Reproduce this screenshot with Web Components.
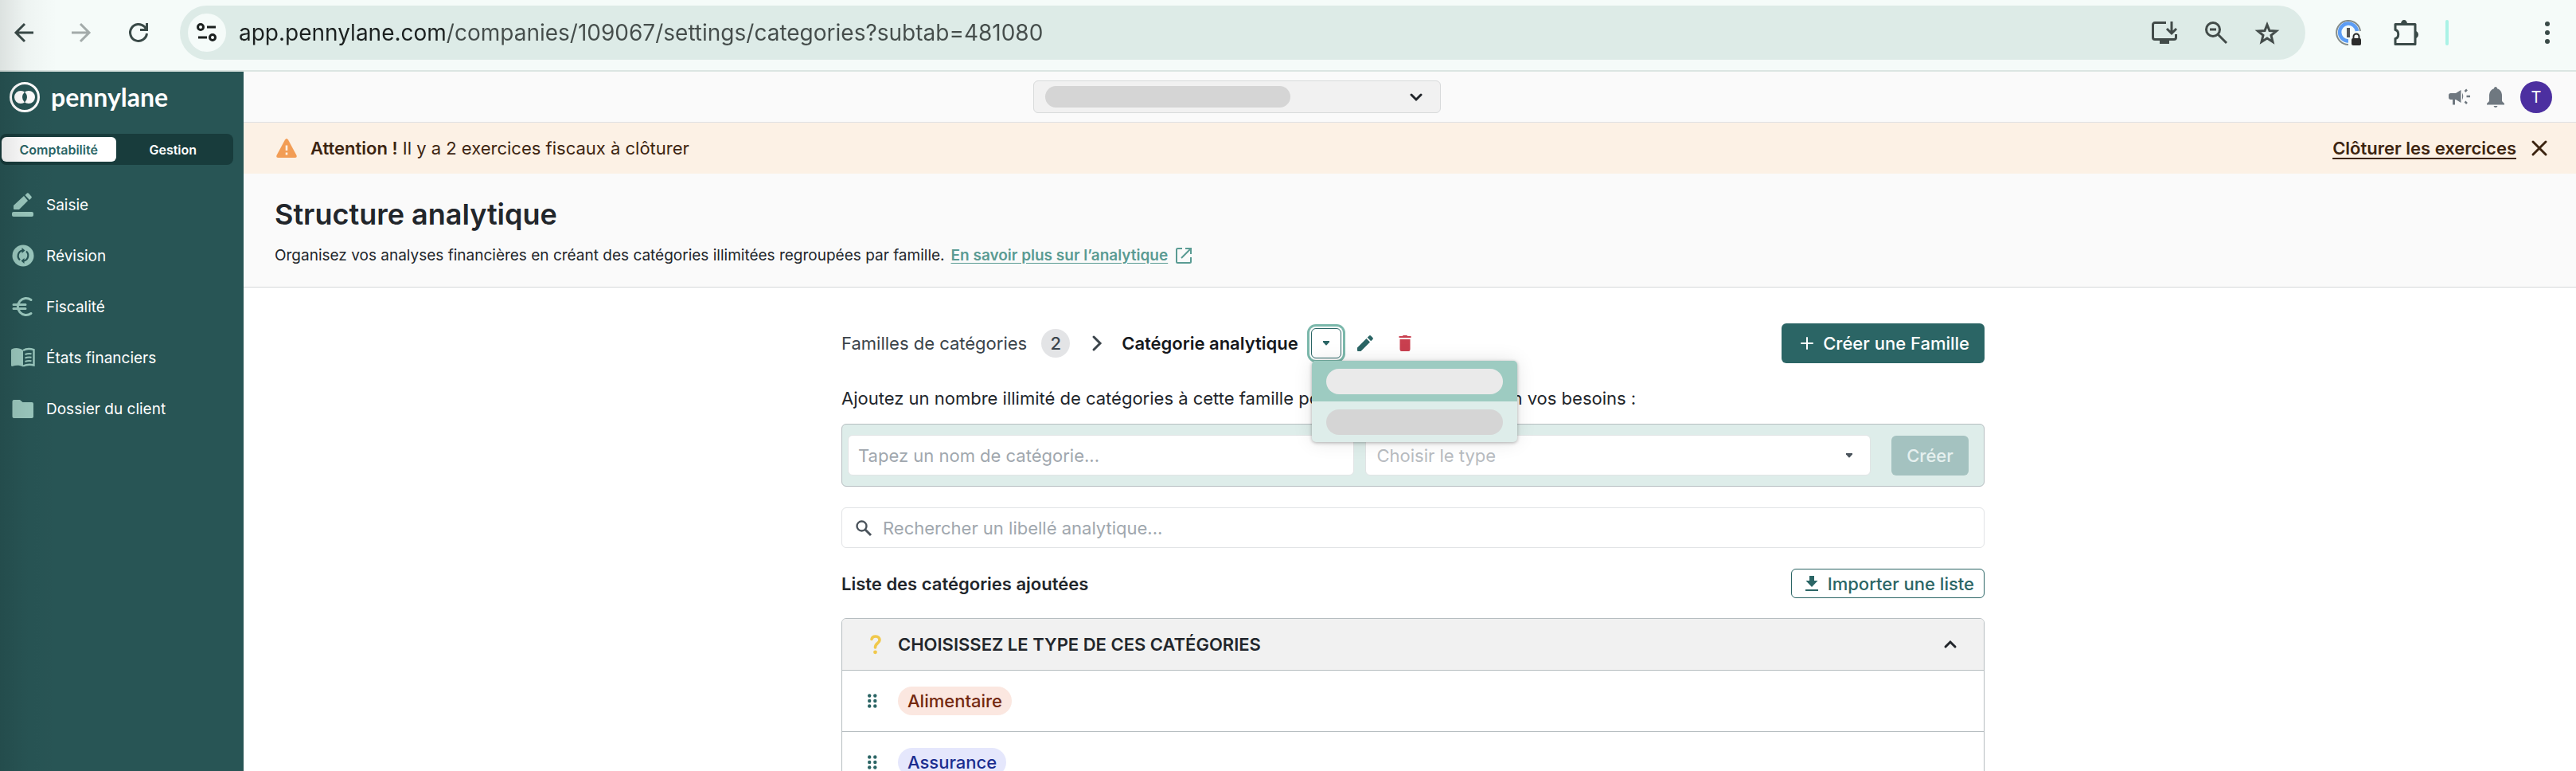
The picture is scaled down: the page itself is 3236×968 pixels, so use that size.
<!DOCTYPE html>
<html lang="fr">
<head>
<meta charset="utf-8">
<title>Structure analytique</title>
<style>
  body {
    margin: 0;
    font-family: Inter, "Liberation Sans", sans-serif;
    font-size: 22px;
    color: #22262b;
    background: white;
  }
</style>
</head>
<body>
<pl-app></pl-app>

<script>
// name: [width, height, svg content], drawn in currentColor
const ICONS = {
  back: [24, 24, '<path d="M24 12H2M13 1 2 12l11 11" fill="none" stroke="currentColor" stroke-width="3"/>'],
  forward: [24, 24, '<path d="M0 12h22M11 1l11 11-11 11" fill="none" stroke="currentColor" stroke-width="3"/>'],
  reload: [24, 24, '<path d="M22.500 13A10.500 10.500 0 1 1 19.500 4.500L22 8" fill="none" stroke="currentColor" stroke-width="3"/><path d="M21 0h3v10H14V7h7z"/>'],
  tune: [26, 24, '<g fill="none" stroke="currentColor" stroke-width="3"><circle cx="5" cy="5" r="3.500"/><path d="M13 5h11M2 18h11"/><circle cx="20" cy="18" r="3.500"/></g>'],
  install: [32, 28, '<path d="M18 1.500H4A2.500 2.500 0 0 0 1.500 4v16A2.500 2.500 0 0 0 4 22.500h24a2.500 2.500 0 0 0 2.500-2.500v-4M25 0v14M19 9l6 6 6-6" fill="none" stroke="currentColor" stroke-width="3"/><path d="M10 23h12v5H10z"/>'],
  zoomout: [28, 28, '<circle cx="10" cy="10" r="8.500" fill="none" stroke="currentColor" stroke-width="3"/><path d="M6 10h8M16 16l11 11" stroke="currentColor" stroke-width="3"/>'],
  star: [30, 29, '<path d="m15 4 3 7.500 8.500.600-6.500 5.300 2 8.100-7-4.400-7 4.400 2-8.100-6.500-5.300L12 11.500z" fill="none" stroke="currentColor" stroke-width="3"/>'],
  password: [32, 32, '<g fill="none"><path d="M31 14A15 15 0 1 0 16 31" stroke="#848b88" stroke-width="2"/><path d="M27 14A11 11 0 1 0 16 26.500" stroke="#5c9df5" stroke-width="4.500"/><path d="M16 10v12" stroke="#555" stroke-width="4"/><path d="M22.500 24v-3a3.500 3.500 0 0 1 7 0v3" stroke="#2c2c2c" stroke-width="2"/></g><rect x="20" y="23" width="12" height="9" rx="2" fill="#2c2c2c"/>'],
  puzzle: [32, 32, '<path d="M3 5.500h25v25H3v-7c5-1 5-10 0-11z" fill="none" stroke="currentColor" stroke-width="3" stroke-linejoin="round"/><path d="M10 5a4 5 0 0 1 8 0zM28 14a4 4.500 0 0 1 0 9z"/>'],
  kebab: [6, 28, '<circle cx="3" cy="3" r="3"/><circle cx="3" cy="14" r="3"/><circle cx="3" cy="25" r="3"/>'],
  logo: [38, 38, '<circle cx="19" cy="19" r="17.500" fill="none" stroke="currentColor" stroke-width="3"/><path fill-rule="evenodd" d="M6 19a8 8 0 1 0 16 0a8 8 0 1 0-16 0zM16 19a8 8 0 1 0 16 0a8 8 0 1 0-16 0z"/>'],
  saisie: [28, 30, '<path d="m2 16 13-12 5 6L9 21H3q-1 0-1-1zM16.500 3 19 .600q1-.800 2 .200l3.500 4q.700 1-.200 1.900L22 9z"/><rect y="24" width="27" height="6" rx="2"/>'],
  revision: [28, 28, '<circle cx="14" cy="14" r="13.500"/><g fill="none" stroke="#285555" stroke-width="2.200"><path d="M10 19.500A7 7 0 0 1 13 7.500M18 8.500A7 7 0 0 1 15 20.500"/></g><path d="m12.500 4 4 3.500-4 3.500zM15.500 17l-4 3.500 4 3.500z" fill="#285555"/>'],
  fiscalite: [28, 26, '<path d="M24 4.500a10.500 10.500 0 1 0 0 17M2 10.500h15M2 15.500h15" fill="none" stroke="currentColor" stroke-width="3" stroke-linecap="round"/>'],
  etats: [30, 24, '<path d="M15 3C11-.500 5-.500 1.500 1 0 1.700 0 2 0 3.500v18c0 1 .600 1.800 2 1.300 4-1.500 9-1.500 13 .800z"/><path d="M15 3c4-2.500 9-2.500 13.500-.800V21.500c-4-1-9-1-13.500 1" fill="none" stroke="currentColor" stroke-width="2.400"/><path d="M17.500 8q4-1.500 8-.700M17.500 12.500q4-1.500 8-.700M17.500 17q4-1.500 8-.700" fill="none" stroke="currentColor" stroke-width="2"/>'],
  dossier: [28, 24, '<path d="M2.500 1H10l3.500 3H25a2 2 0 0 1 2 2v16a2 2 0 0 1-2 2H2.500a2 2 0 0 1-2-2V3a2 2 0 0 1 2-2z"/>'],
  chevronDown: [16, 10, '<path d="m2 2 6 6 6-6" fill="none" stroke="currentColor" stroke-width="3" stroke-linecap="round"/>'],
  chevronUp: [16, 10, '<path d="m2 8 6-6 6 6" fill="none" stroke="currentColor" stroke-width="3" stroke-linecap="round"/>'],
  chevronRight: [12, 20, '<path d="m2 2 8 8-8 8" fill="none" stroke="currentColor" stroke-width="3" stroke-linecap="round"/>'],
  megaphone: [28, 22, '<path d="M2.500 6H9l6.500-4v16L9 14H8v6.500H5V14H2.500C1 14 0 13 0 11.500v-3C0 7 1 6 2.500 6zM17 5.500q2.500 4.500 0 9z"/><path d="M20.500 4 23 1.500M22.500 10H27M20.500 16.500 23 19" stroke="currentColor" stroke-width="2.500"/>'],
  bell: [22, 26, '<path d="M11 0c1.300 0 2 1 2 2.200 4 1.200 6 4.800 6 8.800v7l3 3v1.500H0V21l3-3v-7c0-4 2-7.600 6-8.800C9 1 9.700 0 11 0zM8.500 24h5q-.700 2-2.500 2t-2.500-2z"/>'],
  warning: [26, 24, '<path d="M11 1.500q2-3 4 0L25.500 21q1 3-2 3h-21q-3 0-2-3z"/><path d="M13 8.500v6.500M13 17.500v3" stroke="#fcf1e5" stroke-width="2.600"/>'],
  close: [20, 20, '<path d="m2 2 16 16M18 2 2 18" stroke="currentColor" stroke-width="3" stroke-linecap="round"/>'],
  external: [22, 22, '<path d="M9 2H3.500Q2 2 2 3.500v15Q2 20 3.500 20h15q1.500 0 1.500-1.500V13M13 2h7v7M20 2 8 14" fill="none" stroke="currentColor" stroke-width="2"/>'],
  caret: [8, 6, '<path d="M0 0h8v1.500L4.600 5.300q-.600.500-1.200 0L0 1.500z"/>'],
  pencil: [20, 20, '<path d="M0 15.500 11.500 4 16 8.500 4.500 20H1q-1 0-1-1zM12.700 2.800 15 .500q1-.900 2 0L19.500 3q.900 1 0 2L17.200 7.300z"/>'],
  trash: [16, 20, '<path d="M.500 1H5q0-1 1-1h4q1 0 1 1h4.500v2H.500zM1.500 5h13v12.500q0 2.500-2 2.500h-9q-2 0-2-2.500z"/>'],
  plus: [16, 16, '<path d="M8 1v14M1 8h14" stroke="currentColor" stroke-width="2" stroke-linecap="round"/>'],
  search: [20, 20, '<circle cx="7.500" cy="7.500" r="6" fill="none" stroke="currentColor" stroke-width="2.400"/><path d="m12 12 7 7" stroke="currentColor" stroke-width="3"/>'],
  download: [16, 20, '<path d="M5 0h6v6h4.500L8 14 .500 6H5zM0 17h16v2H0z"/>'],
  question: [14, 24, '<path d="M2 5.500C2.500 3 4.500 2 7 2c3 0 5 1.800 5 4.500C12 10.500 6.500 10.500 6.500 16" fill="none" stroke="currentColor" stroke-width="3.600" stroke-linecap="round"/><circle cx="6.500" cy="21.800" r="2.400"/>'],
  drag: [12, 18, '<circle cx="2.200" cy="2.500" r="2.200"/><circle cx="9.300" cy="2.500" r="2.200"/><circle cx="2.200" cy="9" r="2.200"/><circle cx="9.300" cy="9" r="2.200"/><circle cx="2.200" cy="15.500" r="2.200"/><circle cx="9.300" cy="15.500" r="2.200"/>'],
};

const baseStyle = `
  * { box-sizing: border-box; }
  button, input, select { font: inherit; color: inherit; margin: 0; padding: 0; border: 0; background: none; }
  button { cursor: pointer; display: flex; align-items: center; justify-content: center; white-space: nowrap; }
  a { color: inherit; }
`;

class BaseElement extends HTMLElement {
  constructor() {
    super();
    this.attachShadow({ mode: "open" });
  }

  connectedCallback() {
    this.shadowRoot.innerHTML = `<style>${baseStyle}</style>${this.render()}`;
  }
}

class PlIcon extends BaseElement {
  render() {
    const [w, h, content] = ICONS[this.getAttribute("name")];
    return `
      <style>
        :host { display: inline-flex; flex: none; }
        svg { display: block; overflow: visible; }
      </style>
      <svg width="${w}" height="${h}" viewBox="0 0 ${w} ${h}" fill="currentColor" aria-hidden="true">${content}</svg>
    `;
  }
}

class BrowserBar extends BaseElement {
  render() {
    return `
      <style>
        :host {
          display: flex;
          align-items: center;
          height: 90px;
          padding: 0 33px 6px 18px;
          border-bottom: 2px solid #dbe5e2;
          background: #f5fbf9;
          color: #3a4a48;
        }
        nav { display: flex; gap: 48px; margin-right: 40px; }
        .off { color: #a3abaa; }
        .address {
          flex: 1;
          display: flex;
          align-items: center;
          gap: 35px;
          height: 68px;
          padding: 0 33px 0 10px;
          border-radius: 34px;
          background: #ddebe7;
          color: #424b49;
        }
        .site { width: 48px; height: 48px; border-radius: 50%; background: #f5fbf9; color: #1b201f; }
        input {
          flex: 1;
          height: 48px;
          margin-left: -19px;
          outline: none;
          font-size: 28px;
          /* host name darker than the path */
          background: linear-gradient(90deg, #1b201f 262px, #454d4b 262px);
          -webkit-background-clip: text;
          -webkit-text-fill-color: transparent;
        }
        .tools { display: flex; align-items: center; gap: 40px; margin-left: 38px; }
        .bar { width: 4px; height: 32px; border-radius: 2px; background: #aaf2e6; margin-left: -6px; }
        .menu { margin-left: 81px; }
      </style>
      <nav>
        <button aria-label="Retour"><pl-icon name="back"></pl-icon></button>
        <button class="off" aria-label="Avancer"><pl-icon name="forward"></pl-icon></button>
        <button aria-label="Actualiser"><pl-icon name="reload"></pl-icon></button>
      </nav>
      <div class="address">
        <button class="site" aria-label="Informations sur le site"><pl-icon name="tune"></pl-icon></button>
        <input type="text" aria-label="Adresse" value="app.pennylane.com/companies/109067/settings/categories?subtab=481080">
        <button aria-label="Installer"><pl-icon name="install"></pl-icon></button>
        <button aria-label="Zoom"><pl-icon name="zoomout"></pl-icon></button>
        <button aria-label="Favori"><pl-icon name="star"></pl-icon></button>
      </div>
      <div class="tools">
        <button aria-label="Mots de passe"><pl-icon name="password"></pl-icon></button>
        <button aria-label="Extensions"><pl-icon name="puzzle"></pl-icon></button>
        <span class="bar"></span>
        <button class="menu" aria-label="Menu"><pl-icon name="kebab"></pl-icon></button>
      </div>
    `;
  }
}

class SideLink extends BaseElement {
  render() {
    return `
      <style>
        :host { display: block; }
        a { display: flex; align-items: center; gap: 14px; height: 64px; color: white; font-size: 19px; text-decoration: none; }
        .icon { display: flex; justify-content: center; width: 30px; color: #9bc8be; }
      </style>
      <a href="#"><span class="icon"><pl-icon name="${this.getAttribute("icon")}"></pl-icon></span><slot></slot></a>
    `;
  }
}

class SideBar extends BaseElement {
  render() {
    return `
      <style>
        :host { display: block; background: #285555; color: white; }
        .brand { display: flex; align-items: center; gap: 14px; padding: 13px 12px 27px; }
        .brand span { font-family: Lato, sans-serif; font-weight: 700; font-size: 32px; line-height: 38px; }
        .switch { display: flex; margin: 0 13px 0 0; padding: 4px 4px 4px 2px; border-radius: 8px; background: #183c3c; }
        .switch button { flex: 1; height: 31px; border-radius: 6px; font-size: 16px; font-weight: 600; }
        .switch .on { background: white; color: #2b6565; }
        nav { padding: 18px 0 0 14px; }
      </style>
      <div class="brand"><pl-icon name="logo"></pl-icon><span>pennylane</span></div>
      <div class="switch">
        <button class="on">Comptabilité</button>
        <button>Gestion</button>
      </div>
      <nav>
        <side-link icon="saisie">Saisie</side-link>
        <side-link icon="revision">Révision</side-link>
        <side-link icon="fiscalite">Fiscalité</side-link>
        <side-link icon="etats">États financiers</side-link>
        <side-link icon="dossier">Dossier du client</side-link>
      </nav>
    `;
  }
}

class TopBar extends BaseElement {
  render() {
    return `
      <style>
        :host {
          display: flex;
          align-items: center;
          height: 64px;
          padding-right: 30px;
          border-bottom: 1px solid #dfe1e3;
          background: #fafafa;
          color: #6f7880;
        }
        .left { flex: 992; }
        .right { flex: 1396; display: flex; justify-content: flex-end; align-items: center; gap: 20px; }
        .company {
          width: 512px;
          height: 41px;
          padding: 0 22px 0 14px;
          justify-content: space-between;
          border: 1px solid #d8dadb;
          border-radius: 6px;
          background: #f1f1f1;
          color: #22262b;
        }
        .company span { width: 308px; height: 27px; border-radius: 14px; background: #d5d5d5; }
        .avatar { width: 40px; height: 40px; border-radius: 50%; background: #4c2fa0; color: white; font-size: 20px; }
      </style>
      <div class="left"></div>
      <button class="company" aria-label="Société" aria-haspopup="listbox">
        <span></span><pl-icon name="chevronDown"></pl-icon>
      </button>
      <div class="right">
        <button aria-label="Nouveautés"><pl-icon name="megaphone"></pl-icon></button>
        <button aria-label="Notifications"><pl-icon name="bell"></pl-icon></button>
        <button class="avatar">T</button>
      </div>
    `;
  }
}

class AlertBanner extends BaseElement {
  render() {
    return `
      <style>
        :host {
          display: flex;
          align-items: center;
          height: 64px;
          padding: 0 36px 0 41px;
          background: #fcf1e5;
          color: #3d2511;
        }
        pl-icon[name=warning] { color: #f29d55; margin-right: 17px; }
        p { flex: 1; margin: 0; }
        a { font-weight: 600; text-underline-offset: 4px; text-decoration-thickness: 2px; margin-right: 19px; }
      </style>
      <pl-icon name="warning"></pl-icon>
      <p><slot></slot></p>
      <a href="#">Clôturer les exercices</a>
      <button aria-label="Fermer"><pl-icon name="close"></pl-icon></button>
    `;
  }
}

class PageHeader extends BaseElement {
  render() {
    return `
      <style>
        :host { display: block; padding: 31px 39px 25px; border-bottom: 1px solid #d5d8da; background: #fafafa; }
        h1 { margin: 0; font-size: 36px; line-height: 40px; font-weight: 600; }
        p { display: flex; align-items: center; margin: 18px 0 0; font-size: 19px; line-height: 28px; }
        a { margin: 0 9px 0 8px; color: #5a9b93; font-weight: 600; text-underline-offset: 3px; }
        pl-icon { color: #5a9b93; }
      </style>
      <h1>Structure analytique</h1>
      <p>Organisez vos analyses financières en créant des catégories illimitées regroupées par famille.
        <a href="#">En savoir plus sur l’analytique</a><pl-icon name="external"></pl-icon></p>
    `;
  }
}

class FamilyMenu extends BaseElement {
  render() {
    return `
      <style>
        :host { display: block; position: relative; }
        .toggle {
          width: 38px;
          height: 38px;
          border: 1px solid #2b6565;
          border-radius: 6px;
          background: white;
          color: #2b6565;
          box-shadow: 0 0 0 2px white, 0 0 0 5px #7bb8ab;
        }
        ul {
          position: absolute;
          top: 41px;
          left: 1px;
          z-index: 1;
          width: 258px;
          margin: 0;
          padding: 0;
          list-style: none;
          overflow: hidden;
          border-radius: 5px;
          background: #deedea;
          box-shadow: 0 0 24px rgba(0, 0, 0, 0.1), 0 1px 4px rgba(0, 0, 0, 0.3);
        }
        li { display: flex; align-items: center; height: 51px; padding: 0 18px; }
        li span { flex: 1; height: 32px; border-radius: 16px; background: #d5d5d5; }
        .active { background: #9dcbc1; }
        .active span { background: #eaeaea; }
      </style>
      <button class="toggle" aria-label="Choisir une famille"><pl-icon name="caret"></pl-icon></button>
      <ul>
        <li class="active"><span></span></li>
        <li><span></span></li>
      </ul>
    `;
  }
}

class FamilyBar extends BaseElement {
  render() {
    return `
      <style>
        :host { display: flex; align-items: center; height: 50px; color: #3b444b; }
        a { text-decoration: none; }
        .count { width: 36px; height: 36px; margin: 0 28px 0 18px; border-radius: 50%; background: #e3e4e6; font-weight: 500; line-height: 36px; text-align: center; }
        h2 { margin: 0 16px 0 25px; color: #15181c; font-size: 22px; font-weight: 600; }
        .edit { margin: 0 32px 0 20px; color: #2b6565; }
        .delete { color: #c93f4f; }
        .create {
          height: 50px;
          margin-left: auto;
          padding: 0 19px 0 24px;
          gap: 12px;
          border-radius: 6px;
          background: #2b6565;
          color: white;
          font-weight: 500;
        }
      </style>
      <a href="#">Familles de catégories</a>
      <span class="count">2</span>
      <pl-icon name="chevronRight"></pl-icon>
      <h2>Catégorie analytique</h2>
      <family-menu></family-menu>
      <button class="edit" aria-label="Modifier"><pl-icon name="pencil"></pl-icon></button>
      <button class="delete" aria-label="Supprimer"><pl-icon name="trash"></pl-icon></button>
      <button class="create"><pl-icon name="plus"></pl-icon>Créer une Famille</button>
    `;
  }
}

class CategoryForm extends BaseElement {
  render() {
    return `
      <style>
        :host { display: block; }
        form {
          display: flex;
          align-items: center;
          gap: 14px;
          height: 79px;
          padding: 0 19px 0 7px;
          border: 1px solid #b6bdc0;
          border-radius: 6px;
          background: #deedea;
        }
        .field { flex: 1; display: flex; align-items: center; height: 51px; border: 1px solid #e1e4e5; border-radius: 6px; background: white; }
        input, select { flex: 1; width: 100%; height: 100%; padding: 0 12px; outline: none; appearance: none; }
        select { padding: 0 14px; color: #b8bcc1; }
        input::placeholder { color: #a0a7ae; }
        .field pl-icon { margin-right: 22px; color: #4b545c; }
        button { width: 97px; height: 50px; margin-left: 12px; border-radius: 6px; background: #a4c2c0; color: #e6f0ef; font-weight: 500; }
      </style>
      <form>
        <div class="field"><input type="text" aria-label="Nom de catégorie" placeholder="Tapez un nom de catégorie..."></div>
        <div class="field">
          <select aria-label="Type"><option>Choisir le type</option></select>
          <pl-icon name="caret"></pl-icon>
        </div>
        <button type="button" disabled>Créer</button>
      </form>
    `;
  }
}

class SearchBox extends BaseElement {
  render() {
    return `
      <style>
        :host {
          display: flex;
          align-items: center;
          gap: 14px;
          height: 51px;
          padding: 0 17px;
          border: 1px solid #e1e3e5;
          border-radius: 6px;
          color: #4b545c;
        }
        input { flex: 1; height: 100%; outline: none; }
        input::placeholder { color: #a0a7ae; }
      </style>
      <pl-icon name="search"></pl-icon>
      <input type="search" aria-label="Rechercher" placeholder="Rechercher un libellé analytique...">
    `;
  }
}

class CategoryRow extends BaseElement {
  render() {
    return `
      <style>
        :host { display: flex; align-items: center; gap: 26px; height: 77px; padding: 0 32px; border-top: 1px solid #b6bdc0; }
        button { color: #2b6565; cursor: grab; }
        span {
          padding: 0 12px;
          border-radius: 18px;
          line-height: 36px;
          font-weight: 500;
          background: var(--chip-bg);
          color: var(--chip-color);
        }
      </style>
      <button aria-label="Déplacer"><pl-icon name="drag"></pl-icon></button>
      <span><slot></slot></span>
    `;
  }
}

class CategoryGroup extends BaseElement {
  render() {
    return `
      <style>
        :host { display: block; overflow: hidden; border: 1px solid #b6bdc0; border-radius: 6px 6px 0 0; }
        header { display: flex; align-items: center; gap: 21px; height: 64px; padding: 0 34px 0 35px; background: #f1f1f1; }
        pl-icon[name=question] { color: #f0c84b; }
        h3 { flex: 1; margin: 0; font-size: 22px; font-weight: 600; text-transform: uppercase; }
      </style>
      <header>
        <pl-icon name="question"></pl-icon>
        <h3>${this.getAttribute("heading")}</h3>
        <button aria-label="Replier"><pl-icon name="chevronUp"></pl-icon></button>
      </header>
      <slot></slot>
    `;
  }
}

class CategoryPage extends BaseElement {
  render() {
    return `
      <style>
        :host { display: block; padding: 45px 32px 0 40px; }
        .content { max-width: 1436px; margin: 0 auto; }
        .intro { margin: 30px 0 18px; line-height: 28px; }
        search-box { margin-top: 26px; }
        .title { display: flex; align-items: center; justify-content: space-between; height: 37px; margin: 26px 0 25px; }
        h3 { margin: 0; font-size: 22px; font-weight: 600; }
        .title button {
          height: 37px;
          padding: 0 12px 0 17px;
          gap: 12px;
          border: 1px solid #2b6565;
          border-radius: 6px;
          color: #2b6565;
          font-weight: 500;
        }
      </style>
      <div class="content">
        <family-bar></family-bar>
        <p class="intro">Ajoutez un nombre illimité de catégories à cette famille pour la personnaliser selon vos besoins :</p>
        <category-form></category-form>
        <search-box></search-box>
        <div class="title">
          <h3>Liste des catégories ajoutées</h3>
          <button><pl-icon name="download"></pl-icon>Importer une liste</button>
        </div>
        <category-group heading="Choisissez le type de ces catégories">
          <category-row style="--chip-bg: #fbe7e0; --chip-color: #74290f">Alimentaire</category-row>
          <category-row style="--chip-bg: #e5e7fc; --chip-color: #1b2d8f">Assurance</category-row>
        </category-group>
      </div>
    `;
  }
}

class PlApp extends BaseElement {
  render() {
    return `
      <style>
        :host { display: flex; flex-direction: column; height: 100vh; overflow: hidden; position: relative; }
        /* soft shade along the window's left edge */
        :host::after {
          content: "";
          position: absolute;
          inset: 0 auto 0 0;
          width: 72px;
          background: linear-gradient(90deg, rgba(0, 0, 0, 0.1), rgba(0, 0, 0, 0.03) 45%, rgba(0, 0, 0, 0));
          pointer-events: none;
        }
        browser-bar { flex: none; }
        .window { flex: 1; display: flex; min-height: 0; }
        side-bar { flex: none; width: 306px; }
        main { flex: 1; min-width: 0; overflow: hidden; }
      </style>
      <browser-bar></browser-bar>
      <div class="window">
        <side-bar></side-bar>
        <main>
          <top-bar></top-bar>
          <alert-banner><b style="font-weight: 600">Attention !</b> Il y a 2 exercices fiscaux à clôturer</alert-banner>
          <page-header></page-header>
          <category-page></category-page>
        </main>
      </div>
    `;
  }
}

customElements.define("pl-icon", PlIcon);
customElements.define("browser-bar", BrowserBar);
customElements.define("side-link", SideLink);
customElements.define("side-bar", SideBar);
customElements.define("top-bar", TopBar);
customElements.define("alert-banner", AlertBanner);
customElements.define("page-header", PageHeader);
customElements.define("family-menu", FamilyMenu);
customElements.define("family-bar", FamilyBar);
customElements.define("category-form", CategoryForm);
customElements.define("search-box", SearchBox);
customElements.define("category-row", CategoryRow);
customElements.define("category-group", CategoryGroup);
customElements.define("category-page", CategoryPage);
customElements.define("pl-app", PlApp);
</script>
</body>
</html>
